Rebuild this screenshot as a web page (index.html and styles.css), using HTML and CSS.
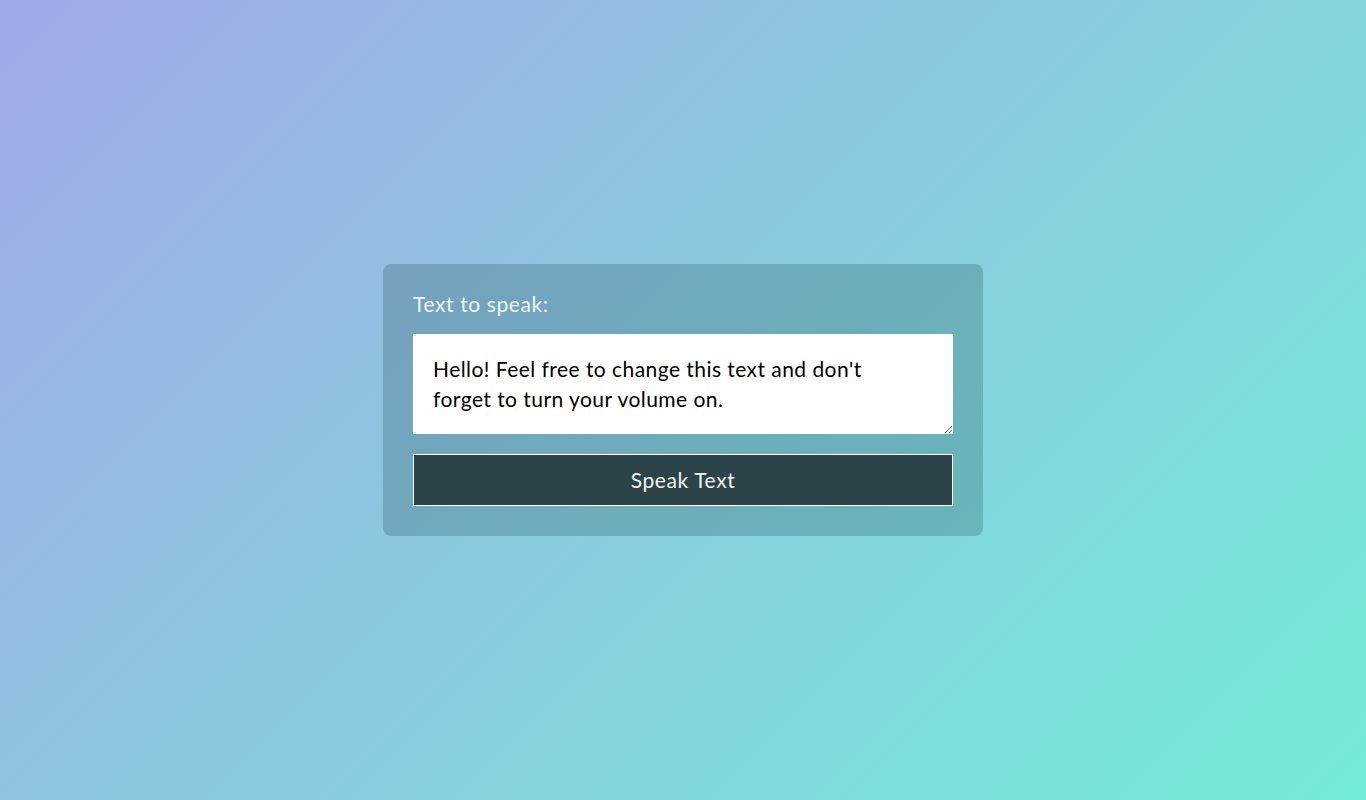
FILE: index.html
```html
<!DOCTYPE html>
<html lang="en">
<head>
<meta charset="utf-8">
<title>Text to Speech</title>
<link rel="stylesheet" href="styles.css">
</head>
<body>
  <div class="card">
    <label class="label" for="text">Text to speak:</label>
    <textarea id="text" class="textarea">Hello! Feel free to change this text and don't forget to turn your volume on.</textarea>
    <button class="btn">Speak Text</button>
  </div>
</body>
</html>
```
FILE: styles.css
```css
* { box-sizing: border-box; }
html, body { height: 100%; }
body {
  margin: 0;
  font-family: "Lato", "Open Sans", sans-serif;
  background: linear-gradient(135deg, #a2a8e8 0%, #8ec5e0 40%, #72ecd6 100%);
  display: flex;
  align-items: center;
  justify-content: center;
}
.card {
  width: 600px;
  padding: 30px;
  border-radius: 8px;
  background: rgba(20, 60, 70, 0.22);
  display: flex;
  flex-direction: column;
}
.label {
  color: #f0f4f6;
  font-size: 21px;
  line-height: 20px;
  height: 20px;
  margin-bottom: 20px;
  letter-spacing: 0.6px;
}
.textarea {
  height: 100px;
  width: 100%;
  border: none;
  padding: 20px 40px 20px 20px;
  font-family: inherit;
  font-size: 21px;
  line-height: 30px;
  letter-spacing: 0.45px;
  color: #000;
  background: #fff;
  margin: 0 0 20px 0;
  resize: vertical;
  display: block;
}
.btn {
  height: 52px;
  width: 100%;
  padding: 0 0 2px 0;
  background: #2c4449;
  color: #f4f4f4;
  border: 1px solid #fff;
  font-family: inherit;
  font-size: 21px;
  letter-spacing: 0.6px;
  cursor: pointer;
}
```
